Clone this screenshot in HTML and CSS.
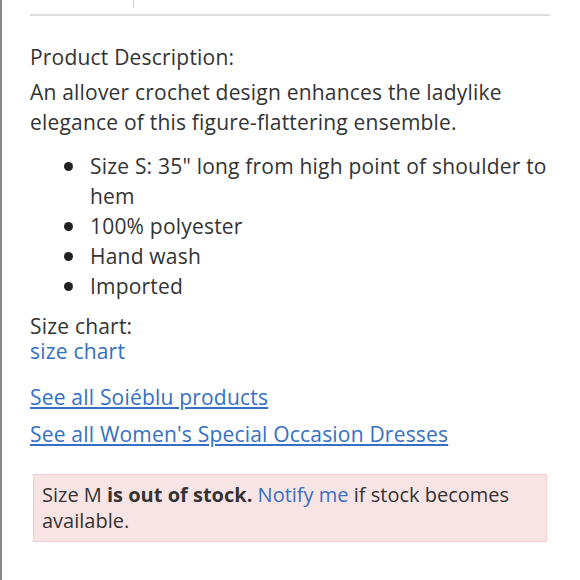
FILE: index.html
```html
<!DOCTYPE html>
<html>
<head>
<meta charset="utf-8">
<link rel="stylesheet" href="styles.css">
</head>
<body>
<div class="page">
  <div class="top">
    <div class="tick"></div>
    <div class="rule"></div>
  </div>
  <div class="content">
    <h2 class="title">Product Description:</h2>
    <p class="desc">An allover crochet design enhances the ladylike elegance of this figure-flattering ensemble.</p>
    <ul class="specs">
      <li>Size S: 35" long from high point of shoulder to hem</li>
      <li>100% polyester</li>
      <li>Hand wash</li>
      <li>Imported</li>
    </ul>
    <div class="chart">
      <div>Size chart:</div>
      <a class="plain" href="#">size chart</a>
    </div>
    <div class="links">
      <a href="#">See all Soiéblu products</a>
      <a href="#">See all Women's Special Occasion Dresses</a>
    </div>
    <div class="alert">Size M <b>is out of stock.</b> <a class="plain" href="#">Notify me</a> if stock becomes available.</div>
  </div>
</div>
</body>
</html>
```

FILE: styles.css
```css
html, body {
  margin: 0;
  padding: 0;
  background: #fff;
}
body {
  font-family: "Open Sans", Lato, sans-serif;
  color: #333;
}
.page {
  border-left: 2px solid #888;
  min-height: 580px;
  box-sizing: border-box;
  padding-left: 28px;
  padding-right: 30px;
}
.top {
  height: 16px;
  position: relative;
}
.tick {
  position: absolute;
  left: 103px;
  top: 0;
  width: 1px;
  height: 7px;
  background: #ccc;
}
.rule {
  position: absolute;
  left: 0;
  right: 0;
  top: 14px;
  height: 2px;
  background: #ddd;
}
.content {
  padding-top: 26px;
  letter-spacing: 0.2px;
}
.title {
  margin: 0;
  font-size: 21px;
  font-weight: 400;
  line-height: 30px;
}
.desc {
  margin: 5px 0 0;
  font-size: 21px;
  line-height: 30px;
}
.specs {
  margin: 14px 0 0;
  padding-left: 60px;
  font-size: 21px;
  line-height: 30px;
  list-style: none;
}
.specs li {
  position: relative;
}
.specs li::before {
  content: "";
  position: absolute;
  left: -26px;
  top: 11px;
  width: 9px;
  height: 9px;
  border-radius: 50%;
  background: #222;
}
.chart {
  margin-top: 13px;
  font-size: 21px;
  line-height: 25px;
}
.chart a {
  display: block;
}
a {
  color: #3570c4;
}
a.plain {
  text-decoration: none;
}
.links {
  margin-top: 21px;
  display: flex;
  flex-direction: column;
  align-items: flex-start;
  gap: 12px;
  font-size: 21px;
  line-height: 25px;
}
.alert {
  margin-top: 27px;
  margin-left: 3px;
  margin-right: 3px;
  background: #f9e4e5;
  border: 1px solid #efcdd0;
  padding: 7px 8px;
  font-size: 20px;
  line-height: 26px;
  letter-spacing: 0;
}
.alert b {
  font-weight: 700;
}
```
